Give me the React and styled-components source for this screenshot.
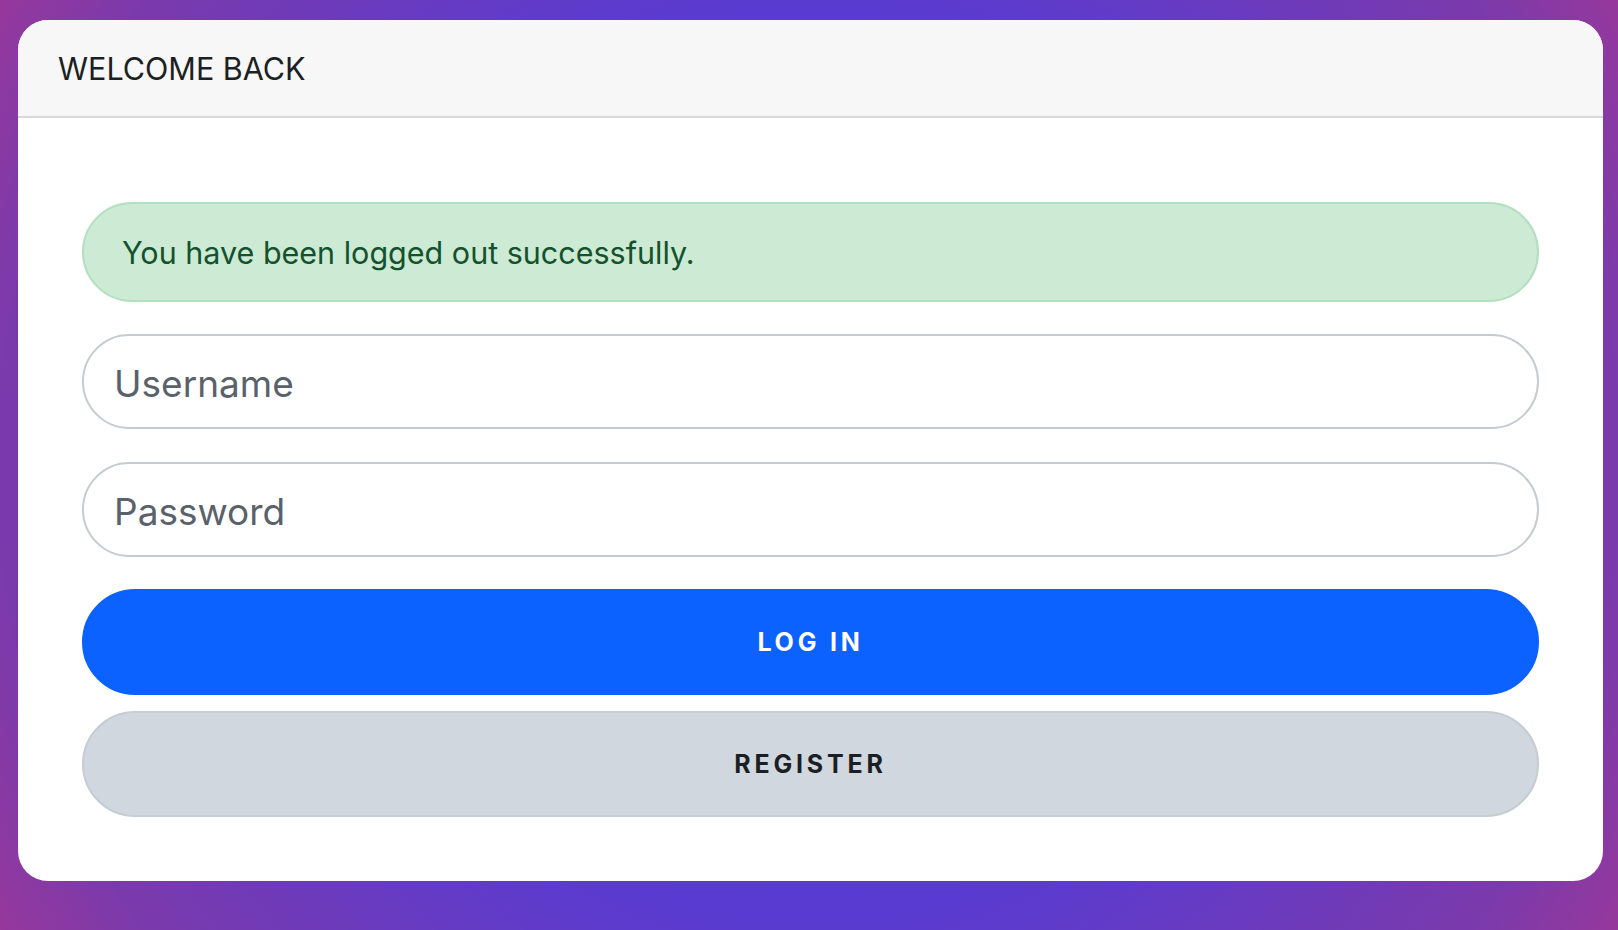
import React from 'react';
import styled, { createGlobalStyle } from 'styled-components';

// Styles
const GlobalStyle = createGlobalStyle`
  html, body {
    margin: 0;
    padding: 0;
  }

  body {
    min-height: 100vh;
    background: radial-gradient(circle at 50% 50%, #4a3ee6 0%, #5a3bd0 50%, #7b3aab 87%, #96389c 100%);
    font-family: Inter, "Liberation Sans", Arial, sans-serif;
  }

  * {
    box-sizing: border-box;
  }
`;

const Page = styled.div`
  padding: 20px 15px 48px 18px;
`;

const Card = styled.section`
  background-color: #fff;
  border-radius: 30px;
  overflow: hidden;
`;

const CardHeader = styled.header`
  height: 98px;
  display: flex;
  align-items: center;
  padding: 0 40px;
  background-color: #f7f7f7;
  border-bottom: 2px solid #d9d9d9;
  color: #1c1f23;
  font-size: 30.5px;
  font-weight: 400;
`;

const CardBody = styled.div`
  padding: 84px 64px 64px;
  display: flex;
  flex-direction: column;
`;

const Alert = styled.div`
  height: 100px;
  display: flex;
  align-items: center;
  padding: 0 38px;
  margin-bottom: 32px;
  background-color: #cceAd4;
  border: 2px solid #b2e0be;
  border-radius: 50px;
  color: #14522d;
  font-size: 30.5px;
`;

const Input = styled.input`
  display: block;
  width: 100%;
  height: 95px;
  padding: 4px 30px 0;
  margin-bottom: ${props => props.last ? '32px' : '33px'};
  border: 2px solid #c6cbd3;
  border-radius: 50px;
  background-color: #fff;
  color: #1c1f23;
  font-family: inherit;
  font-size: 37px;
  outline: none;

  &::placeholder {
    color: #59616b;
  }
`;

const Button = styled.button`
  display: block;
  width: 100%;
  height: 106px;
  margin-bottom: ${props => props.variant === 'primary' ? '16px' : '0'};
  border: 2px solid ${props => props.variant === 'primary' ? '#0b62fe' : '#c6ccd4'};
  border-radius: 53px;
  background-color: ${props => props.variant === 'primary' ? '#0b62fe' : '#d1d7df'};
  color: ${props => props.variant === 'primary' ? '#fff' : '#1b1f24'};
  font-family: inherit;
  font-size: 25px;
  font-weight: 700;
  letter-spacing: 3.8px;
  text-transform: uppercase;
  cursor: pointer;
`;

const App = () => {
  return (
    <>
      <GlobalStyle />
      <Page>
        <Card>
          <CardHeader>WELCOME BACK</CardHeader>
          <CardBody>
            <Alert>You have been logged out successfully.</Alert>
            <Input type="text" placeholder="Username" />
            <Input type="password" placeholder="Password" last />
            <Button variant="primary">Log in</Button>
            <Button variant="secondary">Register</Button>
          </CardBody>
        </Card>
      </Page>
    </>
  );
};

export default App;
